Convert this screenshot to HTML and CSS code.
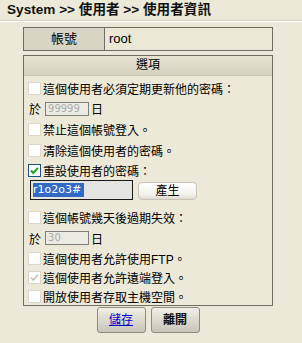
FILE: index.html
```html
<!DOCTYPE html>
<html lang="zh-Hant">
<head>
<meta charset="utf-8">
<link rel="stylesheet" href="styles.css">
</head>
<body>
<div class="title">System &gt;&gt; 使用者 &gt;&gt; 使用者資訊</div>
<div class="main">
  <div class="acct">
    <div class="lbl">帳號</div>
    <div class="val">root</div>
  </div>
  <div class="opts">
    <div class="head">選項</div>
    <div class="row r19"><span class="cb"></span>這個使用者必須定期更新他的密碼：</div>
    <div class="row sub r21">於<span class="field">99999</span>日</div>
    <div class="row r20"><span class="cb"></span>禁止這個帳號登入。</div>
    <div class="row r23"><span class="cb"></span>清除這個使用者的密碼。</div>
    <div class="row r17"><span class="cb on"><svg viewBox="0 0 11 11" width="11" height="11"><path d="M2 5.5 L4.3 8 L9 2.8" fill="none" stroke="#21a121" stroke-width="2"/></svg></span>重設使用者的密碼：</div>
    <div class="row pw"><span class="pwbox"><span class="sel">r1o2o3#</span></span><span class="gen">產生</span></div>
    <div class="row r20"><span class="cb"></span>這個帳號幾天後過期失效：</div>
    <div class="row sub r22">於<span class="field">30</span>日</div>
    <div class="row r19"><span class="cb"></span>這個使用者允許使用FTP。</div>
    <div class="row r19"><span class="cb dis"><svg viewBox="0 0 11 11" width="11" height="11"><path d="M2 5.5 L4.3 8 L9 2.8" fill="none" stroke="#c4c2b6" stroke-width="1.6"/></svg></span>這個使用者允許遠端登入。</div>
    <div class="row r18"><span class="cb"></span>開放使用者存取主機空間。</div>
  </div>
  <div class="actions">
    <span class="btn save">儲存</span>
    <span class="btn">離開</span>
  </div>
</div>
</body>
</html>
```

FILE: styles.css
```css
html, body {
  margin: 0;
  padding: 0;
  background: #ece9d8;
}
body {
  font-family: "Liberation Sans", Arial, "Noto Sans CJK TC", sans-serif;
  font-size: 12px;
  color: #000;
  width: 302px;
  height: 343px;
  overflow: hidden;
}
.title {
  height: 20px;
  line-height: 20px;
  padding-left: 7px;
  font-size: 13.6px;
  font-weight: bold;
  color: #111;
  border-bottom: 1px solid #d6d3c2;
  box-shadow: 0 1px 0 #ffffff;
}
.main {
  width: 250px;
  margin: 6px 0 0 23px;
}
.acct {
  display: flex;
  height: 22px;
  border: 1px solid #6f6c60;
}
.lbl {
  width: 80px;
  background: #d9d5c5;
  border-right: 1px solid #6f6c60;
  text-align: center;
  line-height: 22px;
  font-size: 13px;
}
.val {
  flex: 1;
  padding-left: 4px;
  line-height: 22px;
  font-size: 13px;
  background: #ebe8d6;
}
.opts {
  margin-top: 4px;
  border: 1px solid #6f6c60;
  height: 251px;
  box-sizing: border-box;
}
.head {
  height: 19px;
  line-height: 19px;
  text-align: center;
  font-size: 12px;
  background: linear-gradient(#e6e3d3, #d6d2c1);
  border-bottom: 1px solid #c8c4b2;
  margin-bottom: 3px;
}
.row {
  display: flex;
  align-items: center;
  height: 20px;
  padding-left: 4px;
  font-size: 12px;
  white-space: nowrap;
}
.r17 { height: 17px; }
.r18 { height: 18px; }
.r19 { height: 19px; }
.r20 { height: 20px; }
.r21 { height: 21px; }
.r22 { height: 22px; }
.r23 { height: 23px; }
.row.pw {
  height: 28px;
  align-items: flex-start;
  padding-top: 1px;
  box-sizing: border-box;
  padding-left: 6px;
}
.cb {
  width: 11px;
  height: 11px;
  background: #fff;
  border: 1px solid #dcd9cb;
  margin-right: 2px;
  display: inline-flex;
  flex: none;
}
.cb.on {
  border-color: #1c5180;
}
.cb.dis {
  border-color: #d8d6c8;
}
.sub {
  padding-left: 5px;
}
.field {
  display: inline-block;
  width: 40px;
  height: 12px;
  line-height: 12px;
  margin: 0 2px 0 4px;
  padding-left: 2px;
  border: 1px solid #7f7f7a;
  background: #ebebe4;
  color: #acacaa;
  font-family: "DejaVu Sans", sans-serif;
  font-size: 10px;
}
.pwbox {
  width: 99px;
  height: 18px;
  border: 1px solid #1a1a1a;
  background: #e4e4e0;
  display: flex;
  align-items: center;
  padding-left: 2px;
}
.sel {
  background: #316ac5;
  color: #fff;
  font-family: "DejaVu Sans", sans-serif;
  font-size: 11px;
  line-height: 14px;
  padding-right: 3px;
  white-space: nowrap;
}
.gen {
  margin: 2px 0 0 5px;
  width: 57px;
  height: 16px;
  line-height: 16px;
  text-align: center;
  border: 1px solid #c7c4b6;
  border-radius: 4px;
  background: linear-gradient(#ffffff, #f2f1ec 70%, #dedbd0);
  font-size: 12px;
}
.actions {
  display: flex;
  justify-content: center;
  gap: 5px;
  margin-top: 1px;
}
.btn {
  width: 47px;
  height: 24px;
  line-height: 24px;
  text-align: center;
  border: 1px solid #8f8c7e;
  border-radius: 3px;
  background: linear-gradient(#f0efe8, #d8d6ca 60%, #c8c5b8);
  font-size: 12px;
  font-weight: bold;
  color: #111;
}
.btn.save {
  color: #0000cc;
  text-decoration: underline;
  font-weight: normal;
}
```
